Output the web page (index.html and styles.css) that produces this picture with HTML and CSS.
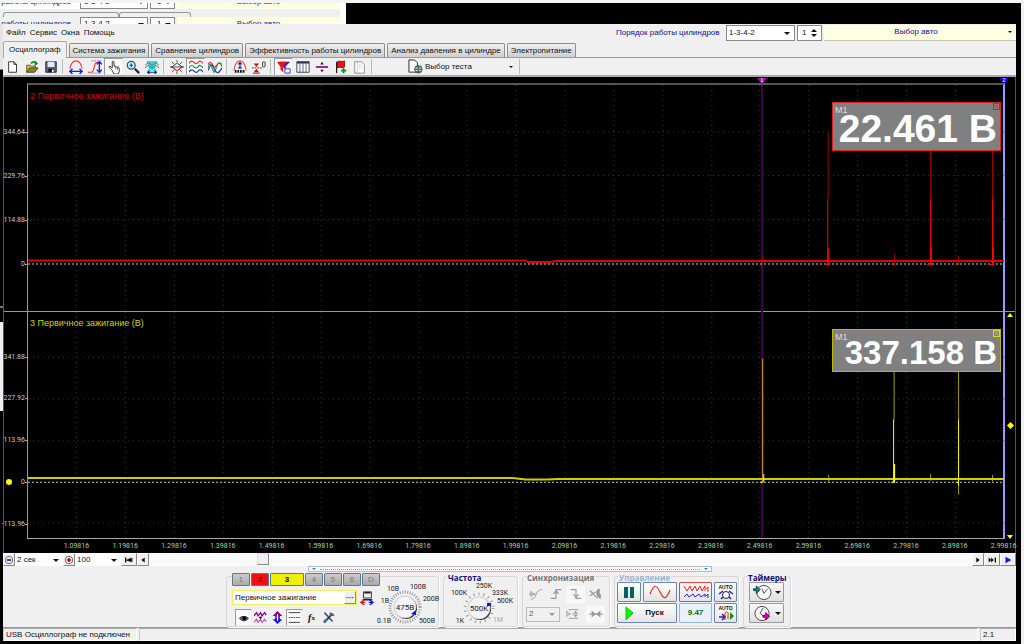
FILE: index.html
```html
<!DOCTYPE html>
<html lang="ru">
<head>
<meta charset="utf-8">
<title>USB Осциллограф</title>
<link rel="stylesheet" href="styles.css">
</head>
<body>
<div class="ghost" aria-hidden="true">
  <div class="ghost-row ghost-upper"><span class="ghost-label">Порядок работы цилиндров</span><span class="ghost-box ghost-order">1-3-4-2<i class="arrow"></i></span><span class="ghost-box ghost-num">1<i class="arrow"></i></span><span class="ghost-auto">Выбор авто</span></div>
  <div class="ghost-tabs"><span></span><span></span></div>
  <div class="ghost-row ghost-lower"><span class="ghost-label">Порядок работы цилиндров</span><span class="ghost-box ghost-order">1-3-4-2<i class="arrow"></i></span><span class="ghost-box ghost-num">1<i class="arrow"></i></span><span class="ghost-auto">Выбор авто</span></div>
</div>
<div class="desktop">
  <div class="edge" aria-hidden="true"><span class="edge-a"></span><span class="edge-b"></span><span class="edge-c"></span><span class="edge-d"></span></div>
  <main class="window">
    <header class="menubar">
      <nav class="menu"><button>Файл</button><button>Сервис</button><button>Окна</button><button>Помощь</button></nav>
      <div class="engine">
        <label for="order">Порядок работы цилиндров</label>
        <span class="drop order"><select id="order"><option>1-3-4-2</option></select></span>
        <span class="spin"><input id="cyl" aria-label="Цилиндр" value="1"><span class="spin-arrows"><i class="arrow up"></i><i class="arrow"></i></span></span>
        <button class="auto"><span>Выбор авто</span><i class="arrow small"></i></button>
      </div>
    </header>
    <div class="tabs" role="tablist">
      <button role="tab" class="tab active">Осциллограф</button><button role="tab" class="tab">Система зажигания</button><button role="tab" class="tab">Сравнение цилиндров</button><button role="tab" class="tab">Эффективность работы цилиндров</button><button role="tab" class="tab">Анализ давления в цилиндре</button><button role="tab" class="tab">Электропитание</button>
    </div>
    <div class="toolbar">
      <button class="tool" aria-label="Новый"><svg viewBox="0 0 16 16"><path d="M3 2h6l3 3v9H3z" fill="#fff" stroke="#222"/><path d="M9 2v3h3" fill="none" stroke="#222"/></svg></button>
      <button class="tool" aria-label="Открыть"><svg viewBox="0 0 16 16"><path d="M2 14V6h4l1 1h5v3" fill="#d8c860" stroke="#54500c"/><path d="M2 14l3-5h10l-4 5z" fill="#8c8430" stroke="#44400c"/><path d="M7 4c2-3 4-2 6-1" fill="none" stroke="#0a9018" stroke-width="2"/><path d="M11 1l4 3-4 3z" fill="#0a9018"/></svg></button>
      <button class="tool" aria-label="Сохранить"><svg viewBox="0 0 16 16"><path d="M2 2h12v12H2z" fill="#567" stroke="#224"/><path d="M4 2h8v6H4z" fill="#e4eaf4"/><path d="M5 10h6v4H5z" fill="#111"/><path d="M9 11h2v3H9z" fill="#fff"/></svg></button>
      <i class="sep"></i>
      <button class="tool" aria-label="Развернуть по горизонтали"><svg viewBox="0 0 16 16"><path d="M1 10C2 5 4 1 8 1s6 4 7 9" fill="none" stroke="#f33" stroke-width="1.3"/><path d="M1 13h14M4 10l-3 3 3 3M12 10l3 3-3 3" fill="none" stroke="#12d" stroke-width="1.6"/></svg></button>
      <button class="tool" aria-label="Развернуть по вертикали"><svg viewBox="0 0 16 16"><path d="M0 14h4c4 0 2-11 6-11h3" fill="none" stroke="#f33" stroke-width="1.3"/><path d="M4 1h11M5 15h10" stroke="#777" stroke-dasharray="2 1"/><path d="M13 2v12M10 5l3-3 3 3M10 11l3 3 3-3" fill="none" stroke="#12d" stroke-width="1.6"/></svg></button>
      <button class="tool pressed" aria-label="Рука"><svg viewBox="0 0 16 16"><path d="M6 12L2 8l1-1 3 2V2l1-1 1 1v5l2 0 1 1 2 0 1 2v3l-1 3H8z" fill="#fff" stroke="#222"/><path d="M10 8v2M12 9v2" stroke="#333"/></svg></button>
      <button class="tool" aria-label="Масштаб"><svg viewBox="0 0 16 16"><circle cx="6" cy="6" r="4.500" fill="#c4ecff" stroke="#356" stroke-width="1.4"/><path d="M10 10l5 5" stroke="#224" stroke-width="2.5"/><path d="M4 6h4M6 4v4" stroke="#157" stroke-width="1.3"/></svg></button>
      <button class="tool" aria-label="Поиск"><svg viewBox="0 0 16 16"><path d="M2 1h12v3l-2 2v6H4V6L2 4z" fill="#2cdce0"/><path d="M0 6l4-3 4 3 4-3 4 3" fill="none" stroke="#c44"/><path d="M0 9l4-3 4 3 4-3 4 3" fill="none" stroke="#0a8a50"/><path d="M3 14h10M5 12l-2 2 2 2M11 12l2 2-2 2" fill="none" stroke="#128" stroke-width="1.3"/></svg></button>
      <i class="sep"></i>
      <button class="tool" aria-label="Центрировать"><svg viewBox="0 0 16 16"><path d="M1 8c4 0 4-4 7-4s3 4 7 4" fill="none" stroke="#0b8c30" stroke-width="1.2"/><path d="M1 8c4 0 4 4 7 4s3-4 7-4" fill="none" stroke="#c22" stroke-width="1.2"/><path d="M2 2l3 3M14 2l-3 3M2 14l3-3M14 14l-3-3M8 0v3M8 16v-3M0 8h16" stroke="#444"/></svg></button>
      <button class="tool pressed" aria-label="Раздельно"><svg viewBox="0 0 16 16"><path d="M0 4c2-4 4-3 6-1s4 1 5-1 4 0 5 2" fill="none" stroke="#e22" stroke-width="1.3"/><path d="M0 9c2-4 4-3 6-1s4 1 5-1 4 0 5 2" fill="none" stroke="#189848" stroke-width="1.3"/><path d="M0 14c2-4 4-3 6-1s4 1 5-1 4 0 5 2" fill="none" stroke="#22c" stroke-width="1.3"/></svg></button>
      <button class="tool" aria-label="Совместно"><svg viewBox="0 0 16 16"><path d="M0 5c4-6 5 1 7 3s4-8 9-3" fill="none" stroke="#e22" stroke-width="1.2"/><path d="M0 9c3-12 5 4 7 5s4-20 9-6" fill="none" stroke="#189848" stroke-width="1.2"/><path d="M0 12c4-10 5-6 7-2s4 8 9-1" fill="none" stroke="#22c" stroke-width="1.2"/></svg></button>
      <i class="sep"></i>
      <button class="tool" aria-label="Автомасштаб"><svg viewBox="0 0 16 16"><path d="M1 12C2 6 4 1 8 1s6 5 7 11" fill="none" stroke="#e44" stroke-width="1.2"/><path d="M8 3v7M6 5l2-2 2 2M6 9h4" fill="none" stroke="#128" stroke-width="1.3"/><path d="M2 13h12" fill="none" stroke="#111" stroke-width="3" stroke-dasharray="2 1"/></svg></button>
      <button class="tool" aria-label="Установить ноль"><svg viewBox="0 0 16 16"><path d="M0 9h11" stroke="#222" stroke-dasharray="2 1"/><path d="M2 4h6L5 8zM2 14h6l-3-4z" fill="#b11"/><path d="M1 15h8" stroke="#911"/><rect x="12" y="2" width="3" height="6" rx="1.5" fill="none" stroke="#222"/></svg></button>
      <i class="sep"></i>
      <button class="tool pressed" aria-label="Фильтр"><svg viewBox="0 0 16 16"><path d="M3 2h12l-5 5v4L7 8z" fill="#22c"/><path d="M0 2h11L7 8v6l-3-3V8z" fill="#e11"/><path d="M9 10h6v5H9z" fill="#fff" stroke="#22c"/></svg></button>
      <button class="tool" aria-label="Таблица"><svg viewBox="0 0 16 16"><path d="M1 2h14v12H1z" fill="#fff" stroke="#234"/><path d="M1 3h14" stroke="#234" stroke-width="2"/><path d="M4.500 3v11M8 3v11M11.500 3v11" stroke="#457"/></svg></button>
      <button class="tool" aria-label="Разделитель"><svg viewBox="0 0 16 16"><path d="M1 8h14" stroke="#818" stroke-width="2"/><path d="M8 2l2 3H6zM8 14l2-3H6z" fill="#222"/></svg></button>
      <button class="tool" aria-label="Флаг"><svg viewBox="0 0 16 16"><path d="M3 2v13" stroke="#222" stroke-width="1.500"/><path d="M4 2c3-2 4 1 8-1v7c-4 2-5-1-8 1z" fill="#e11" stroke="#811"/><path d="M11 9v6M8 12h6" stroke="#0a9020" stroke-width="2"/></svg></button>
      <button class="tool" aria-label="Отчёт"><svg viewBox="0 0 16 16"><path d="M2 2h8l3 3v10H2z" fill="#fff" stroke="#888"/><path d="M5 3v11M7 6h4M7 9h4" stroke="#999" stroke-dasharray="1 1"/></svg></button>
      <i class="sep"></i>
      <button class="test"><svg viewBox="0 0 16 16"><path d="M1 1h6l3 3v10H1z" fill="#fff" stroke="#222"/><circle cx="11" cy="11" r="4" fill="#ccd8cc" stroke="#354"/><path d="M7 11h8M11 7v8M8 8.500h6M8 13.500h6" stroke="#354"/></svg><span>Выбор теста</span><i class="arrow small"></i></button>
      <i class="sep"></i>
    </div>

    <section class="plot">
      <div class="cursors"><b class="cursor purple" style="left:75.200%"><i>1</i></b><b class="cursor blue" style="left:100%"><i>2</i></b></div>
      <div class="plot-top"></div>
      <div class="pane pane-red">
        <div class="yaxis"><span style="top:21.400%">344.64</span><span style="top:40.800%">229.76</span><span style="top:60%">114.88</span><span style="top:79.400%">0</span></div>
        <div class="canvas">
          <svg class="trace" viewBox="0 0 977 228" preserveAspectRatio="none">
            <path class="grid" d="M48.500 0V228M97.500 0V228M146.500 0V228M195.500 0V228M244.500 0V228M293.500 0V228M342.500 0V228M391.500 0V228M439.500 0V228M488.500 0V228M537.500 0V228M586.500 0V228M635.500 0V228M684.500 0V228M732.500 0V228M781.500 0V228M830.500 0V228M879.500 0V228M928.500 0V228M0 47.500H977M0 91.500H977M0 136H977"/>
            <path class="zero" d="M0 181H977"/>
            <path class="red-dim" d="M801 48V115M903.500 66V115M965.500 66V115M735.500 172V182M867.500 171V183M931.500 173V182"/>
            <path class="red-line" d="M0 177.500H498L500 179H524L528 178H977"/>
            <path class="red" d="M800.500 115V181M801.500 165V181M798 181.500H802M903.500 115V181M904.500 164V181M900 181.500H905M965.500 115V181M966.500 164V181M962 181.500H967"/>
          </svg>
          <h2 class="trace-title">2 Первичное зажигание (В)</h2>
          <div class="meter"><small>M1</small><strong>22.461 В</strong><button aria-label="Закрыть"><svg viewBox="0 0 7 7"><path d="M1 1l5 5M6 1L1 6"/></svg></button></div>
        </div>
        <div class="side"></div>
      </div>
      <div class="pane pane-yellow">
        <div class="yaxis"><b class="dot"></b><span style="top:20%">341.88</span><span style="top:38.200%">227.92</span><span style="top:56.600%">113.96</span><span style="top:75%">0</span><span style="top:93.300%">-113.96</span></div>
        <div class="canvas">
          <svg class="trace" viewBox="0 0 977 228" preserveAspectRatio="none">
            <path class="grid" d="M48.500 0V228M97.500 0V228M146.500 0V228M195.500 0V228M244.500 0V228M293.500 0V228M342.500 0V228M391.500 0V228M439.500 0V228M488.500 0V228M537.500 0V228M586.500 0V228M635.500 0V228M684.500 0V228M732.500 0V228M781.500 0V228M830.500 0V228M879.500 0V228M928.500 0V228M0 45.500H977M0 87.500H977M0 129.500H977M0 212.500H977"/>
            <path class="zero" d="M0 171.500H977"/>
            <path class="yellow-dim" d="M867 60V108M931.500 60V108M931.500 170V184M801.500 164V171M903.500 163V170M965.500 164V170"/>
            <path class="yellow-line" d="M0 167H485L498 168.500H520L530 168H977"/>
            <path class="orange" d="M735.500 47V171"/>
            <path class="yellow" d="M733 171.500H736M736.500 163V171M866.500 108V171M867.500 153V171M864 171.500H868M931.500 108V175M929 171.500H932"/>
          </svg>
          <h2 class="trace-title">3 Первичное зажигание (В)</h2>
          <div class="meter"><small>M1</small><strong>337.158 В</strong><button aria-label="Закрыть"><svg viewBox="0 0 7 7"><path d="M1 1l5 5M6 1L1 6"/></svg></button></div>
        </div>
        <div class="side"><i class="tri-up"></i><i class="diamond"></i><i class="tri-down"></i></div>
      </div>
      <div class="xaxis"><span>1.09816</span><span>1.19816</span><span>1.29816</span><span>1.39816</span><span>1.49816</span><span>1.59816</span><span>1.69816</span><span>1.79816</span><span>1.89816</span><span>1.99816</span><span>2.09816</span><span>2.19816</span><span>2.29816</span><span>2.39816</span><span>2.49816</span><span>2.59816</span><span>2.69816</span><span>2.79816</span><span>2.89816</span><span>2.99816</span></div>
    </section>

    <div class="scrollrow">
      <button class="mini" aria-label="Уменьшить"><svg viewBox="0 0 12 12"><circle cx="6" cy="6" r="4.500" fill="#eef" stroke="#555"/><path d="M3.500 6h5" stroke="#22a" stroke-width="2"/></svg></button>
      <span class="drop flat"><select aria-label="Развёртка"><option>2 сек</option></select></span>
      <button class="mini" aria-label="Увеличить"><svg viewBox="0 0 12 12"><circle cx="6" cy="6" r="4.500" fill="#fee" stroke="#555"/><path d="M3.500 6h5M6 3.500v5" stroke="#a11" stroke-width="2"/></svg></button>
      <span class="drop flat second"><select aria-label="Масштаб"><option>100</option></select></span>
      <button class="mini wide" aria-label="В начало"><svg viewBox="0 0 12 12"><path d="M2 3v6M3 6h3" stroke="#000" stroke-width="1.500"/><path d="M4 6l4-3v6zM7 6l3-3v6z"/></svg></button>
      <button class="mini" aria-label="Назад"><svg viewBox="0 0 12 12"><path d="M4 6l4-3v6z"/></svg></button>
      <div class="track"><span class="thumb"></span></div>
      <button class="mini" aria-label="Вперёд"><svg viewBox="0 0 12 12"><path d="M8 6L4 3v6z"/></svg></button>
      <button class="mini wide" aria-label="В конец"><svg viewBox="0 0 12 12"><path d="M10 3v6" stroke="#000" stroke-width="1.500"/><path d="M8 6L5 3v6zM5 6L2 3v6z"/></svg></button>
      <button class="mini wide" aria-label="Воспроизвести"><svg viewBox="0 0 12 12"><path d="M10 6L3 2v8z" fill="#11f"/></svg></button>
    </div>

    <section class="controls">
      <div class="splitter"><i></i><b></b><i></i></div>
      <div class="groups">
        <section class="group channel">
          <div class="channel-main">
            <div class="numbers"><button>1</button><button class="n-red">2</button><button class="n-yellow">3</button><button>4</button><button>5</button><button>6</button><button>D</button></div>
            <div class="name-row"><span class="name"><input aria-label="Канал" value="Первичное зажигание"><button aria-label="Выбрать">···</button></span>
              <svg class="icon" viewBox="0 0 16 16"><path d="M4 1h9v7H4z" fill="#eee" stroke="#222"/><path d="M5 2h7M3 10h11" stroke="#222" stroke-width="1.500"/><path d="M6 13H2M5 10l-4 3 4 3" fill="none" stroke="#d11" stroke-width="1.500"/><path d="M10 13h4M11 10l4 3-4 3" fill="none" stroke="#11d" stroke-width="1.500"/></svg></div>
            <div class="channel-tools">
              <button class="tool pressed" aria-label="Показать"><svg viewBox="0 0 16 16"><path d="M3 9c2-3 8-3 11 0-3 4-8 4-11 0z" fill="#777" stroke="#111"/><circle cx="9" cy="9" r="2.500"/></svg></button>
              <button class="tool" aria-label="Инвертировать"><svg viewBox="0 0 16 16"><path d="M0 6l3-4 2 4 3-4 2 4 3-4 2 3" fill="none" stroke="#808" stroke-width="1.600"/><path d="M0 14l3-4 2 4 3-4 2 4 3-4 2 3" fill="none" stroke="#c5c" stroke-width="1.400"/><path d="M6 7h4l-2 3z"/></svg></button>
              <button class="tool" aria-label="Сместить"><svg viewBox="0 0 16 16"><path d="M8 0l6 6h-3v2H5V6H2z" fill="#808"/><path d="M8 16l6-6h-3V8H5v2H2z" fill="#11f"/><path d="M8 4v8" stroke="#fff" stroke-width="1.5"/></svg></button>
              <button class="tool pressed" aria-label="Линии"><svg viewBox="0 0 16 16"><path d="M1 2h14M1 14h14" stroke="#222"/><path d="M1 8h14" stroke="#222" stroke-dasharray="2 1"/></svg></button>
              <button class="tool formula" aria-label="Формула"><em>f</em><small>x</small></button>
              <button class="tool" aria-label="Настройки"><svg viewBox="0 0 16 16"><path d="M3 2l10 11" stroke="#456" stroke-width="2"/><path d="M13 3L3 14" stroke="#345" stroke-width="2.5"/><path d="M10 2l1 3 4 0" fill="none" stroke="#567" stroke-width="2"/><path d="M6 10l-4 4" stroke="#37b" stroke-width="3"/></svg></button>
            </div>
          </div>
          <svg class="dial dial-volt" viewBox="0 0 66 50" role="img" aria-label="Предел 475В">
            <circle cx="31" cy="30" r="15" class="ticks"/><circle cx="32" cy="31" r="11" class="knob-shadow"/><circle cx="31" cy="30" r="11" class="knob"/>
            <path d="M37 37l5-4v5z" fill="#11f"/>
            <text x="31" y="33" class="big">475В</text><text x="19" y="14">10В</text><text x="44" y="12">100В</text><text x="57" y="24">200В</text><text x="11" y="26">1В</text><text x="10" y="46">0.1В</text><text x="53" y="46">500В</text>
          </svg>
        </section>
        <section class="group freq"><h3>Частота</h3>
          <svg class="dial" viewBox="0 0 72 50" role="img" aria-label="Частота 500K">
            <circle cx="35" cy="31" r="14" class="ticks sparse"/><circle cx="36" cy="32" r="11" class="knob-shadow"/><circle cx="35" cy="31" r="11" class="knob"/>
            <path d="M43 26h4v3h-4z" fill="#11f"/>
            <text x="35" y="34" class="big">500K</text><text x="40" y="11">250K</text><text x="15" y="18">100K</text><text x="56" y="18">333K</text><text x="61" y="26">500K</text><text x="16" y="46">1K</text><text x="54" y="45" class="muted">1M</text>
          </svg>
        </section>
        <section class="group sync"><h3>Синхронизация</h3>
          <div class="sync-row">
            <button class="tool" aria-label="Уровень"><svg viewBox="0 0 16 16"><path d="M2 14c8 0 4-11 13-11M0 8h9M2 5v6l4-3z" fill="none" stroke="#999"/></svg></button>
            <button class="tool" aria-label="Фронт"><svg viewBox="0 0 16 16"><path d="M2 13h6V3h6M5 8l3-4 3 4" fill="none" stroke="#999" stroke-width="1.300"/></svg></button>
            <button class="tool lit" aria-label="Спад"><svg viewBox="0 0 16 16"><path d="M2 3h6v10h6M5 8l3 4 3-4" fill="none" stroke="#999" stroke-width="1.300"/></svg></button>
            <button class="tool" aria-label="Рука"><svg viewBox="0 0 16 16"><path d="M1 4l9 9M1 10l6-4M11 2l-3 5" stroke="#999" fill="none" stroke-width="1.400"/><path d="M8 5l5-3-1 4 2 4-1 4-4-4z" fill="#999"/></svg></button>
          </div>
          <div class="sync-row"><span class="drop disabled"><select disabled aria-label="Канал синхронизации"><option>2</option></select></span>
            <button class="tool" aria-label="Вертикаль"><svg viewBox="0 0 16 16"><path d="M3 3h11M7 8h7M3 13h11M1 4v7M1 6l4 2-4 2" fill="none" stroke="#999"/><path d="M11 4l2 3H9zM11 12l2-3H9z" fill="#999"/></svg></button>
            <button class="tool lit" aria-label="Сжать"><svg viewBox="0 0 16 16"><path d="M0 8h16" stroke="#999" stroke-width="1.400"/><path d="M3 4l5 4-5 4zM13 4L8 8l5 4z" fill="#999"/></svg></button>
          </div>
        </section>
        <section class="group manage"><h3>Управление</h3>
          <div class="manage-grid">
            <button class="pause" aria-label="Пауза"><svg viewBox="0 0 16 16"><path d="M5 3v11M11 3v11" stroke="#15a" stroke-width="4"/><path d="M5 3v11M11 3v11" stroke="#063" stroke-width="2.500"/></svg></button>
            <button class="sine" aria-label="Синус"><svg viewBox="0 0 24 16"><path d="M2 10c4-10 6-10 10-2s6 8 10-2" fill="none" stroke="#e22" stroke-width="1.200"/></svg></button>
            <button class="wave" aria-label="Поток"><svg viewBox="0 0 26 16"><path d="M1 2l3 5 3-5 2 5 3-5 2 5 3-5 2 5 3-5v5M23 5l2-2v5" fill="none" stroke="#e22"/><path d="M1 13l3-3 2 3 4-3 2 3 4-3 2 3 4-3v3M23 12l2-2v4" fill="none" stroke="#22d"/></svg></button>
            <button aria-label="Авто настройка"><span class="auto-text">AUTO</span><svg viewBox="0 0 16 10"><circle cx="8" cy="5" r="3.500" fill="#fff" stroke="#222"/><path d="M1 4l4-3M11 1l4 3M3 9l2-2M13 9l-2-2" stroke="#22c" stroke-width="1.500"/></svg></button>
            <button class="start"><svg viewBox="0 0 16 16"><path d="M5 2l7 6-7 7z" fill="#0f0" stroke="#0c0"/></svg><span>Пуск</span></button>
            <button class="value">9.47</button>
            <button aria-label="Авто пуск"><span class="auto-text">AUTO</span><svg viewBox="0 0 16 10"><path d="M1 6h5M4 3l3 3-3 3" fill="none" stroke="#22c" stroke-width="1.500"/><path d="M7 9V3c0-3 4-3 3 1v4" fill="none" stroke="#d22"/><path d="M12 1l4 4-4 4z" fill="#090"/></svg></button>
          </div>
        </section>
        <section class="group timers"><h3>Таймеры</h3>
          <button aria-label="Таймер начала"><svg viewBox="0 0 20 18"><circle cx="12" cy="9" r="7.500" fill="#f4f4f4" stroke="#444"/><path d="M10 5l2 5 4-5" fill="none" stroke="#555"/><path d="M1 5h3V2l4 4-4 4V7H1z" fill="#188080" stroke="#044"/></svg><i class="arrow"></i></button>
          <button aria-label="Таймер конца"><svg viewBox="0 0 20 18"><circle cx="10" cy="9" r="7.500" fill="#f4f4f4" stroke="#444"/><path d="M11 3L8 9l4 3" fill="none" stroke="#555"/><path d="M11 11h3V8l4 4-4 4v-3h-3z" fill="#d0c" stroke="#605"/></svg><i class="arrow"></i></button>
        </section>
      </div>
    </section>
    <footer class="status"><span class="status-main">USB Осциллограф не подключен</span><span class="status-mid"></span><span class="status-ver">2.1</span></footer>
  </main>
</div>
</body>
</html>
```
FILE: styles.css
```css
* { box-sizing: border-box; }
html { background: #000; }
body {
  margin: 0;
  min-height: 100vh;
  display: flex;
  flex-direction: column;
  background: #000;
  border-top: 3px solid #f4f4f4;
  border-right: 3px solid #f0f0f0;
  font: 8px/10px "Liberation Sans", Arial, sans-serif;
  color: #111;
}
button, input, select { font: inherit; color: inherit; margin: 0; padding: 0; border: 0; border-radius: 0; background: none; min-width: 0; }
button { display: flex; align-items: center; justify-content: center; white-space: nowrap; }
select { appearance: none; width: 100%; height: 100%; padding-left: 2px; }
svg { display: block; }
h2, h3 { margin: 0; font-size: inherit; }
.arrow { flex: none; width: 0; height: 0; border: 3px solid transparent; border-top: 3px solid #111; border-bottom: 0; }
.arrow.up { border-top: 0; border-bottom: 3px solid #111; }
.arrow.small { border-width: 2px 2px 0; }

/* Leftover of the windows lying behind */
.ghost { flex: none; width: 346px; height: 21px; overflow: hidden; background: #fff; color: #22229a; }
.ghost-row { display: flex; gap: 2px; overflow: hidden; background: #f0f0f0; margin-right: 6px; }
.ghost-upper { height: 6px; align-items: flex-end; background: #fff; }
.ghost-lower { height: 7px; align-items: flex-start; }
.ghost-label { width: 78px; flex: none; display: flex; justify-content: flex-end; padding-right: 7px; white-space: nowrap; line-height: 14px; }
.ghost-box { display: flex; flex: none; align-items: center; justify-content: space-between; height: 14px; padding: 0 3px; border: 1px solid #888; background: #fff; color: #111; }
.ghost-order { width: 68px; }
.ghost-num { width: 25px; padding-left: 6px; }
.ghost-auto { flex: 1; line-height: 14px; text-align: center; background: #ffffe1; }
.ghost-tabs { display: flex; height: 8px; padding: 3px 0 0 3px; background: #f0f0f0; margin-right: 6px; }
.ghost-tabs span { width: 116px; border: 1px solid #999; border-bottom: 0; border-radius: 3px 3px 0 0; }
.ghost-tabs span + span { width: 72px; }

.desktop { flex: 1; display: flex; padding: 0 5px 3px 0; }
.edge { flex: none; width: 3px; display: flex; flex-direction: column; }
.edge-a { flex: 0 0 46px; background: #e4e4e4; border-bottom: 1px solid #888; }
.edge-b { flex: 0 0 238px; border-bottom: 2px solid #777; }
.edge-c { flex: 0 0 14px; }
.edge-d { flex: 0 0 89px; background: #f0f0f0; }

.window { flex: 1; min-width: 0; display: flex; flex-direction: column; background: #f0f0f0; }

.menubar { display: flex; justify-content: space-between; height: 17px; align-items: center; }
.menu { display: flex; gap: 4px; padding-left: 3px; }
.engine { display: flex; flex: 0 1 400px; height: 16px; align-items: stretch; gap: 2px; color: #10108c; }
.engine label { flex: none; width: 104px; align-self: center; margin-right: 4px; white-space: nowrap; }
.drop { position: relative; display: block; background: #fff; border: 1px solid #888; color: #111; }
.drop::after { content: ""; position: absolute; right: 4px; top: calc(50% - 1px); border: 3px solid transparent; border-top-color: #111; border-bottom: 0; pointer-events: none; }
.order { width: 69px; flex: none; }
.spin { width: 25px; flex: none; display: flex; align-items: center; background: #fff; border: 1px solid #888; color: #111; padding: 0 4px; }
.spin input { width: 100%; }
.spin-arrows { display: flex; flex-direction: column; gap: 2px; }
.auto { flex: 1; background: #ffffe1; border-bottom: 1px solid #c8c8b0; padding-right: 4px; }
.auto span { flex: 1; }

.tabs { display: flex; align-items: flex-end; gap: 2px; height: 17px; border-bottom: 1px solid #999; }
.tab { height: 14px; padding: 0 3px; border: 1px solid #8c8c8c; border-bottom: 0; border-radius: 2px 2px 0 0; background: linear-gradient(#f0f0f0, #cfcfcf); }
.tab.active { height: 17px; margin-bottom: -1px; padding: 0 5px; background: #f0f0f0; border-color: #aaa; }

.toolbar { display: flex; align-items: center; height: 19px; border-bottom: 2px solid #aaa; }
.tool { flex: none; width: 19px; height: 17px; }
.tool svg { width: 14px; height: 14px; }
.pressed { background: #fafafa; border: 1px solid; border-color: #999 #eee #eee #999; }
.sep { flex: none; width: 1px; height: 15px; margin: 0 2px; background: #bbb; }
.toolbar .sep { margin-right: 3px; }
.test { width: 142px; padding-left: 33px; gap: 2px; }
.test svg { width: 15px; height: 15px; }
.test span { flex: 1; text-align: left; }
.test .arrow { margin-right: 4px; }

/* Oscillogram */
.plot { position: relative; flex: 1; display: flex; flex-direction: column; min-height: 300px; background: #000; border: solid #555; border-width: 0 1px; color: #ddd; }
.plot-top { flex: none; height: 6px; }
.pane { flex: 1; display: flex; min-height: 0; }
.pane-yellow { border-top: 1px solid #999; }
.yaxis { position: relative; flex: none; width: 23px; font: 7px/8px Roboto, "Liberation Sans", sans-serif; color: #ccc; }
.yaxis span { position: absolute; right: 2px; transform: translateY(-50%); }
.yaxis span::after { content: ""; position: absolute; left: 100%; top: 50%; width: 2px; border-top: 1px solid #aaa; }
.dot { position: absolute; left: 2px; top: 75%; width: 6px; height: 6px; margin-top: -3px; border-radius: 50%; background: #ff0; }
.canvas { position: relative; flex: 1; min-width: 0; border-left: 1px solid #999; }
.pane-red .canvas { border-top: 2px solid #555; }
.pane-yellow .canvas { border-bottom: 1px solid #aaa; }
.side { position: relative; flex: none; width: 11px; }
.trace { position: absolute; inset: 0; width: 100%; height: 100%; }
.trace path { fill: none; vector-effect: non-scaling-stroke; }
.grid { stroke: #343434; stroke-dasharray: 1 4; }
.zero { stroke: #ccc; stroke-dasharray: 2 2; }
.red-dim { stroke: #a00000; }
.red { stroke: #f00; }
.red-line { stroke: #e00000; stroke-width: 2; }
.yellow-dim { stroke: #a09a00; }
.yellow { stroke: #ff0; }
.yellow-line { stroke: #d0d000; stroke-width: 2; }
.orange { stroke: #f0a030; }
.trace-title { position: absolute; left: 2px; top: 5px; font-size: 9px; line-height: 12px; font-weight: normal; white-space: nowrap; }
.pane-red .trace-title { color: #d00000; }
.pane-yellow .trace-title { color: #d0d000; }
.meter { position: absolute; right: 3px; top: 17px; width: 169px; height: 49px; background: #808080; border: 1px solid #e02020; color: #fff; display: flex; justify-content: flex-end; align-items: center; padding: 4px 3px 0 0; }
.meter strong { font-size: 39px; line-height: 39px; white-space: nowrap; }
.meter small { position: absolute; left: 2px; top: 2px; font-size: 9px; line-height: 10px; color: #ddd; }
.meter button { position: absolute; right: 0; top: 0; width: 7px; height: 7px; border: 1px solid #e02020; color: #e02020; }
.meter svg { width: 5px; height: 5px; stroke: currentColor; }
.pane-yellow .meter { height: 43px; border-color: #c0b800; }
.pane-yellow .meter strong { font-size: 33px; line-height: 33px; }
.pane-yellow .meter button { border-color: #e0e000; color: #e0e000; }
.tri-up, .tri-down { position: absolute; left: 3px; border: 3px solid transparent; }
.tri-up { top: 1px; border-top: 0; border-bottom: 4px solid #ff0; }
.tri-down { bottom: 0; border-bottom: 0; border-top: 4px solid #ff0; }
.diamond { position: absolute; left: 4px; top: 49%; width: 5px; height: 5px; background: #ff0; transform: rotate(45deg); }
.xaxis { flex: none; display: grid; grid-template-columns: repeat(20, 1fr); height: 14px; margin: 0 -13px 0 48px; padding-top: 3px; font: 7px/9px Roboto, "Liberation Sans", sans-serif; text-align: center; color: #a8d0a8; }
.cursors { position: absolute; left: 24px; right: 11px; top: 1px; bottom: 14px; pointer-events: none; }
.cursor { position: absolute; top: 0; bottom: 0; width: 2px; margin-left: -1px; }
.cursor i { position: absolute; left: -4px; top: 0; width: 10px; height: 6px; clip-path: polygon(0 0, 100% 0, 50% 100%); font: 5px/5px "Liberation Sans", sans-serif; text-align: center; color: #fff; }
.purple { background: #3d0048; }
.purple i { background: #a018a8; }
.blue { background: #9898ff; }
.blue i { background: #11f; }

.scrollrow { display: flex; height: 13px; background: #fafafa; align-items: stretch; }
.mini { flex: none; width: 12px; background: #f0f0f0; border: 1px solid; border-color: #fff #888 #888 #fff; }
.mini svg { width: 10px; height: 10px; }
.mini.wide { width: 16px; }
.flat { width: 48px; border: 0; }
.flat.second { width: 46px; }
.track { flex: 1; padding-left: 10.700%; }
.thumb { display: block; width: 12px; height: 12px; background: #f0f0f0; border: 1px solid; border-color: #ddd #888 #888 #ddd; }

/* Instrument controls */
.controls { position: relative; height: 62px; border-bottom: 1px solid #999; }
.splitter { width: 404px; height: 6px; margin: 0 auto; display: flex; align-items: center; gap: 4px; padding: 0 3px; border: 1px solid #bbb; background: #f8f8f8; }
.splitter b { flex: 1; border-top: 1px dotted #58a8f0; }
.splitter i { border: 2px solid transparent; border-top-color: #2080e0; border-bottom: 0; }
.groups { display: flex; justify-content: center; gap: 4px; padding: 4px 2px 0 0; }
.group { position: relative; height: 51px; border: 1px solid #d8d8d8; border-radius: 3px; box-shadow: 1px 1px 0 #fff; }
.group h3 { position: absolute; left: 3px; top: -4px; padding: 0 1px; background: #f0f0f0; font: bold 8px/9px "Open Sans", "Liberation Sans", sans-serif; color: #10107c; }
.channel { width: 213px; display: flex; }
.channel-main { width: 147px; flex: none; padding-left: 5px; display: flex; flex-direction: column; margin-top: -4px; }
.numbers { display: flex; gap: 1px; height: 13px; }
.numbers button { flex: 0 0 18px; height: 13px; border: 1px solid #5c7894; border-radius: 1px; background: linear-gradient(#ccc, #aaa); color: #777; }
.numbers .n-red { background: #f01010; color: #600; }
.numbers .n-yellow { flex-basis: 34px; background: #f0f000; color: #111; font-weight: bold; }
.name-row { display: flex; align-items: center; gap: 3px; height: 23px; }
.name { display: flex; width: 125px; height: 15px; background: #fff; border: 1px solid #f0f060; padding-left: 2px; }
.name input { flex: 1; }
.name button { width: 12px; background: #eee; border: 1px solid; border-color: #fff #888 #888 #fff; font-weight: bold; }
.icon { width: 14px; height: 14px; }
.channel-tools { display: flex; height: 17px; padding-left: 3px; }
.channel-tools .tool { width: 17px; }
.channel-tools .tool svg { width: 13px; height: 13px; }
.channel-tools .formula { font: bold 10px/12px "Liberation Serif", serif; }
.formula small { font-size: 7px; }
.dial { flex: none; width: 66px; height: 50px; overflow: visible; }
.freq .dial { width: 72px; }
.dial text { font: 7px Roboto, "Liberation Sans", sans-serif; text-anchor: middle; fill: #222; }
.dial .big { font-size: 8px; }
.dial .muted { fill: #aaa; }
.ticks { fill: none; stroke: #999; stroke-width: 3; stroke-dasharray: 1 1.500; }
.ticks.sparse { stroke-dasharray: 1 4; }
.knob { fill: #f4f4f4; stroke: #ccc; }
.knob-shadow { fill: #222; }
.freq { width: 75px; }
.sync { width: 88px; padding: 7px 4px 0 3px; }
.sync h3 { color: #777; }
.sync-row { display: flex; justify-content: space-between; height: 20px; align-items: center; }
.lit { background: #f8f8f8; }
.disabled { width: 34px; height: 15px; background: #f0f0f0; border-color: #bbb; }
.disabled select { color: #555; opacity: 1; }
.disabled::after { border-top-color: #999; }
.manage { width: 125px; padding: 5px 3px 0 2px; }
.manage h3 { color: #9cb4d0; }
.manage-grid { display: grid; grid-template-columns: 24px 34px 33px 23px; grid-auto-rows: 20px; gap: 1px 2px; }
.manage-grid button { border: 1px solid #6888b0; border-radius: 1px; background: linear-gradient(#fff, #e4e4e4); }
.manage-grid svg { height: 16px; }
.manage-grid button:nth-child(4), .manage-grid button:nth-child(7) { flex-direction: column; }
.manage-grid button:nth-child(4) svg, .manage-grid button:nth-child(7) svg { height: 10px; width: 16px; }
.auto-text { font: bold 5px/6px "Liberation Sans", sans-serif; }
.manage-grid .wave { border-color: #f04040; }
.manage-grid .start { grid-column: span 2; justify-content: flex-start; padding-left: 3px; font-weight: bold; }
.start span { flex: 1; padding-right: 4px; }
.manage-grid .value { border-color: #90b8e8; background: #e8f0f8; color: #087010; font-weight: bold; }
.timers { width: 48px; padding: 5px 6px 0 5px; display: flex; flex-direction: column; gap: 1px; }
.timers button { height: 20px; gap: 3px; border: 1px solid #999; border-radius: 1px; background: linear-gradient(#f8f8f8, #e0e0e0); }
.timers svg { width: 20px; height: 17px; }

.status { display: flex; height: 13px; gap: 2px; }
.status span { padding: 0 2px; line-height: 11px; border: 1px solid; border-color: #aaa #fff #fff #ccc; white-space: nowrap; }
.status-main { width: 134px; }
.status-mid { flex: 1; }
.status-ver { width: 36px; }
```
